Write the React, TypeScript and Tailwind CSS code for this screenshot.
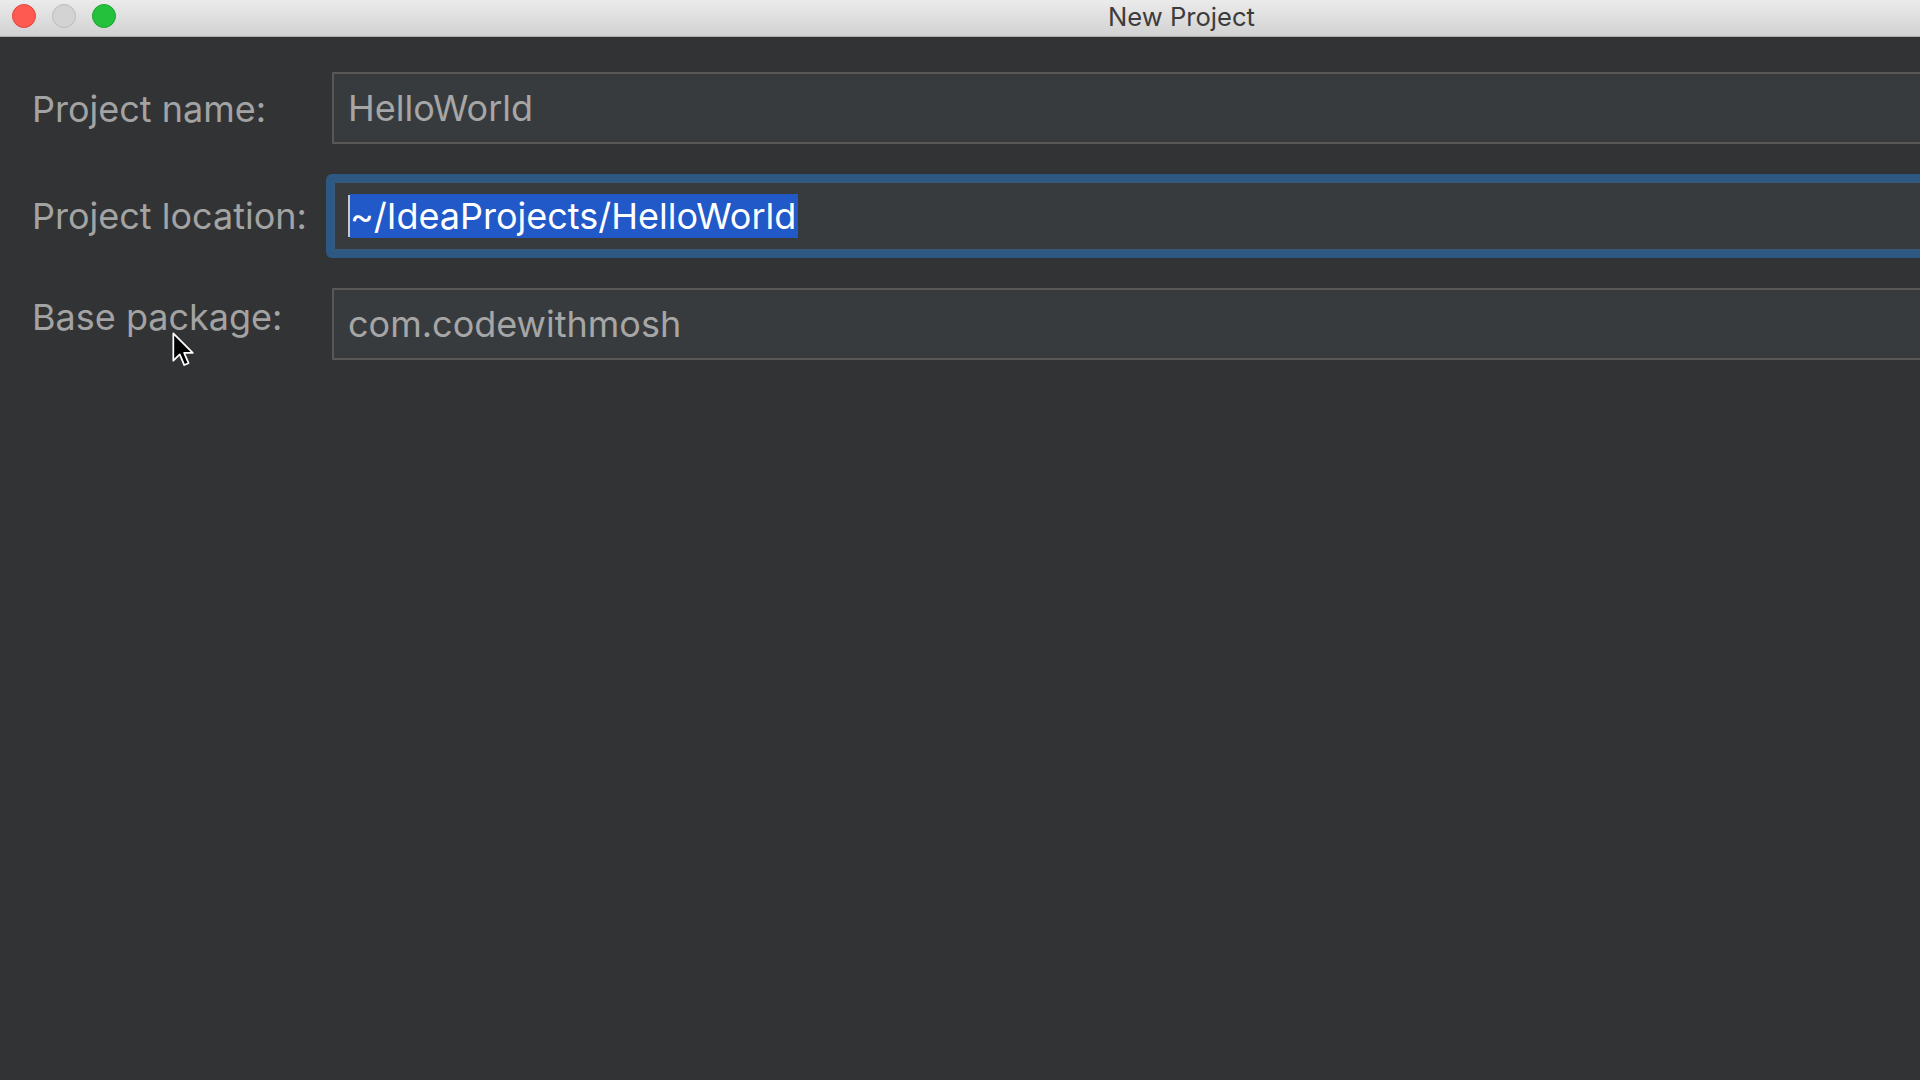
import React from "react";

const font = { fontFamily: "Inter, 'Noto Sans', 'Liberation Sans', sans-serif" };

function Cursor() {
  return (
    <svg
      className="absolute left-[172px] top-[332px]"
      width="24"
      height="36"
      viewBox="0 0 18 27"
    >
      <path
        d="M1 1 L1 21.5 L5.8 16.8 L9.2 24.8 L12.4 23.4 L9.1 15.6 L15.6 15.6 Z"
        fill="#000"
        stroke="#fff"
        strokeWidth="1.3"
        strokeLinejoin="round"
      />
    </svg>
  );
}

export default function App() {
  return (
    <div
      className="relative w-[1920px] h-[1080px] overflow-hidden bg-[#323335] flex flex-col"
      style={font}
    >
      {/* Title bar */}
      <div className="h-[37px] shrink-0 flex items-start bg-gradient-to-b from-[#ebebeb] to-[#d2d2d2] border-b border-[#adadad]">
        <div className="flex gap-[16px] pl-[12px] pt-[4px]">
          <div className="w-[24px] h-[24px] rounded-full bg-[#fe5a52] border border-[#e0443d]" />
          <div className="w-[24px] h-[24px] rounded-full bg-[#d3d3d3] border border-[#bdbdbd]" />
          <div className="w-[24px] h-[24px] rounded-full bg-[#23c13c] border border-[#1ca532]" />
        </div>
        <div className="ml-[992px] h-[35px] leading-[33px] text-[25.6px] text-[#3c3c3c]">
          New Project
        </div>
      </div>

      {/* Form */}
      <div className="flex flex-col gap-[30px] pt-[35px] pl-[32px] mr-[-40px]">
        <div className="flex items-center">
          <div className="w-[294px] shrink-0 text-[36px] text-[#a3a3a3] whitespace-nowrap mt-[2px]">
            Project name:
          </div>
          <div className="ml-[6px] flex-1 h-[72px] bg-[#383b3e] border-2 border-[#5a5757] flex items-center pl-[14px] text-[36px] text-[#a6a6a6]">
            HelloWorld
          </div>
        </div>

        <div className="flex items-center">
          <div className="w-[294px] shrink-0 text-[36px] text-[#a3a3a3] whitespace-nowrap">
            Project location:
          </div>
          <div className="flex-1 h-[84px] rounded-[6px] bg-[#2c5883] p-[7px]">
            <div className="h-full bg-[#383b3e] border-2 border-[#33597d] flex items-center pl-[13px]">
              <span className="w-[2px] h-[42px] bg-[#c8c8c8]" />
              <span className="h-[44px] leading-[44px] bg-[#2159c9] text-white text-[36px] pr-[2px] whitespace-nowrap">
                ~/IdeaProjects/HelloWorld
              </span>
            </div>
          </div>
        </div>

        <div className="flex items-center">
          <div className="w-[294px] shrink-0 text-[36px] text-[#a3a3a3] whitespace-nowrap mb-[14px]">
            Base package:
          </div>
          <div className="ml-[6px] flex-1 h-[72px] bg-[#383b3e] border-2 border-[#5a5757] flex items-center pl-[14px] text-[36px] text-[#a6a6a6]">
            com.codewithmosh
          </div>
        </div>
      </div>

      <Cursor />
    </div>
  );
}
